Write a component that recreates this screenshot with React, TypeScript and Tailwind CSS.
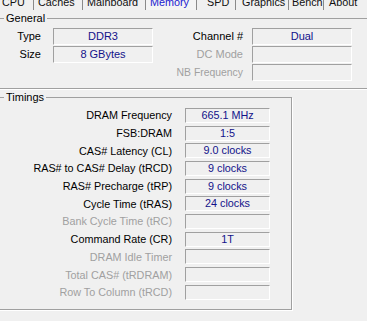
import React from "react";

const font = { fontFamily: '"Liberation Sans", Arial, sans-serif' };

function Field({ value, w, h }: { value?: string; w: string; h: string }) {
  return (
    <div
      className={`${w} ${h} flex items-center justify-center border-t border-l border-t-[#a0a0a0] border-l-[#a0a0a0] border-b border-r border-b-white border-r-white text-[#12128a] leading-none whitespace-nowrap`}
    >
      {value}
    </div>
  );
}

const tabs: { name: string; cls: string; active?: boolean }[] = [
  { name: "CPU", cls: "w-[34px] pl-[2px]" },
  { name: "Caches", cls: "w-[49px] pl-[4px]" },
  { name: "Mainboard", cls: "w-[63px] pl-[4px]" },
  { name: "Memory", cls: "w-[51px] pl-[4px]", active: true },
  { name: "SPD", cls: "w-[39px] pl-[10px]" },
  { name: "Graphics", cls: "w-[53px] pl-[6px]" },
  { name: "Bench", cls: "w-[35px] pl-[3px]" },
  { name: "About", cls: "w-[60px] pl-[5px]" },
];

const timings: { label: string; value?: string; dis?: boolean }[] = [
  { label: "DRAM Frequency", value: "665.1 MHz" },
  { label: "FSB:DRAM", value: "1:5" },
  { label: "CAS# Latency (CL)", value: "9.0 clocks" },
  { label: "RAS# to CAS# Delay (tRCD)", value: "9 clocks" },
  { label: "RAS# Precharge (tRP)", value: "9 clocks" },
  { label: "Cycle Time (tRAS)", value: "24 clocks" },
  { label: "Bank Cycle Time (tRC)", dis: true },
  { label: "Command Rate (CR)", value: "1T" },
  { label: "DRAM Idle Timer", dis: true },
  { label: "Total CAS# (tRDRAM)", dis: true },
  { label: "Row To Column (tRCD)", dis: true },
];

export default function App() {
  return (
    <div
      className="w-[367px] h-[321px] bg-[#f0f0f0] overflow-hidden text-[10.8px] text-black"
      style={font}
    >
      {/* tab strip */}
      <div className="flex h-[10px] overflow-hidden whitespace-nowrap">
        {tabs.map((t) => (
          <div
            key={t.name}
            className={`${t.cls} shrink-0 h-[10px] border-r border-r-[#8a8a8a] ${
              t.active ? "text-[#1a1ad0] bg-[#f4f4f4]" : "text-[#111]"
            }`}
          >
            <div className="leading-[13px] -mt-[4px]">{t.name}</div>
          </div>
        ))}
      </div>

      {/* General */}
      <fieldset className="mt-[2px] -mx-[4px] w-[375px] border border-[#a0a0a0] shadow-[1px_1px_0_#fff] pb-[6px]">
        <legend className="ml-[7px] px-[2px] leading-[13px] text-[11px]">General</legend>
        <div className="pt-[3px] flex flex-col text-[11px]">
          <div className="flex items-start h-[18px]">
            <div className="w-[44px] text-right leading-[17px]">Type</div>
            <div className="ml-[12px]">
              <Field value="DDR3" w="w-[100px]" h="h-[17px]" />
            </div>
            <div className="w-[90px] text-right leading-[17px]">Channel #</div>
            <div className="ml-[9px]">
              <Field value="Dual" w="w-[100px]" h="h-[17px]" />
            </div>
          </div>
          <div className="flex items-start h-[18px]">
            <div className="w-[44px] text-right leading-[17px]">Size</div>
            <div className="ml-[12px]">
              <Field value="8 GBytes" w="w-[100px]" h="h-[17px]" />
            </div>
            <div className="w-[90px] text-right leading-[17px] text-[#a0a0a0]">DC Mode</div>
            <div className="ml-[9px]">
              <Field w="w-[100px]" h="h-[17px]" />
            </div>
          </div>
          <div className="flex items-start h-[18px]">
            <div className="w-[44px]" />
            <div className="ml-[12px] w-[100px]" />
            <div className="w-[90px] text-right leading-[17px] text-[#a0a0a0] text-[10.4px]">NB Frequency</div>
            <div className="ml-[9px]">
              <Field w="w-[100px]" h="h-[17px]" />
            </div>
          </div>
        </div>
      </fieldset>

      {/* Timings */}
      <fieldset className="mt-[2px] -ml-[4px] w-[296px] border border-[#a0a0a0] shadow-[1px_1px_0_#fff] pb-[7.6px]">
        <legend className="ml-[7px] px-[2px] leading-[13px] text-[11px]">Timings</legend>
        <div className="pt-[2.6px] flex flex-col">
          {timings.map((r) => (
            <div key={r.label} className="flex items-center h-[17.7px]">
              <div
                className={`w-[175px] text-right whitespace-nowrap ${
                  r.dis ? "text-[#a0a0a0]" : "text-black"
                }`}
              >
                {r.label}
              </div>
              <div className="ml-[13px]">
                <Field value={r.value} w="w-[85px]" h="h-[15px]" />
              </div>
            </div>
          ))}
        </div>
      </fieldset>
    </div>
  );
}
